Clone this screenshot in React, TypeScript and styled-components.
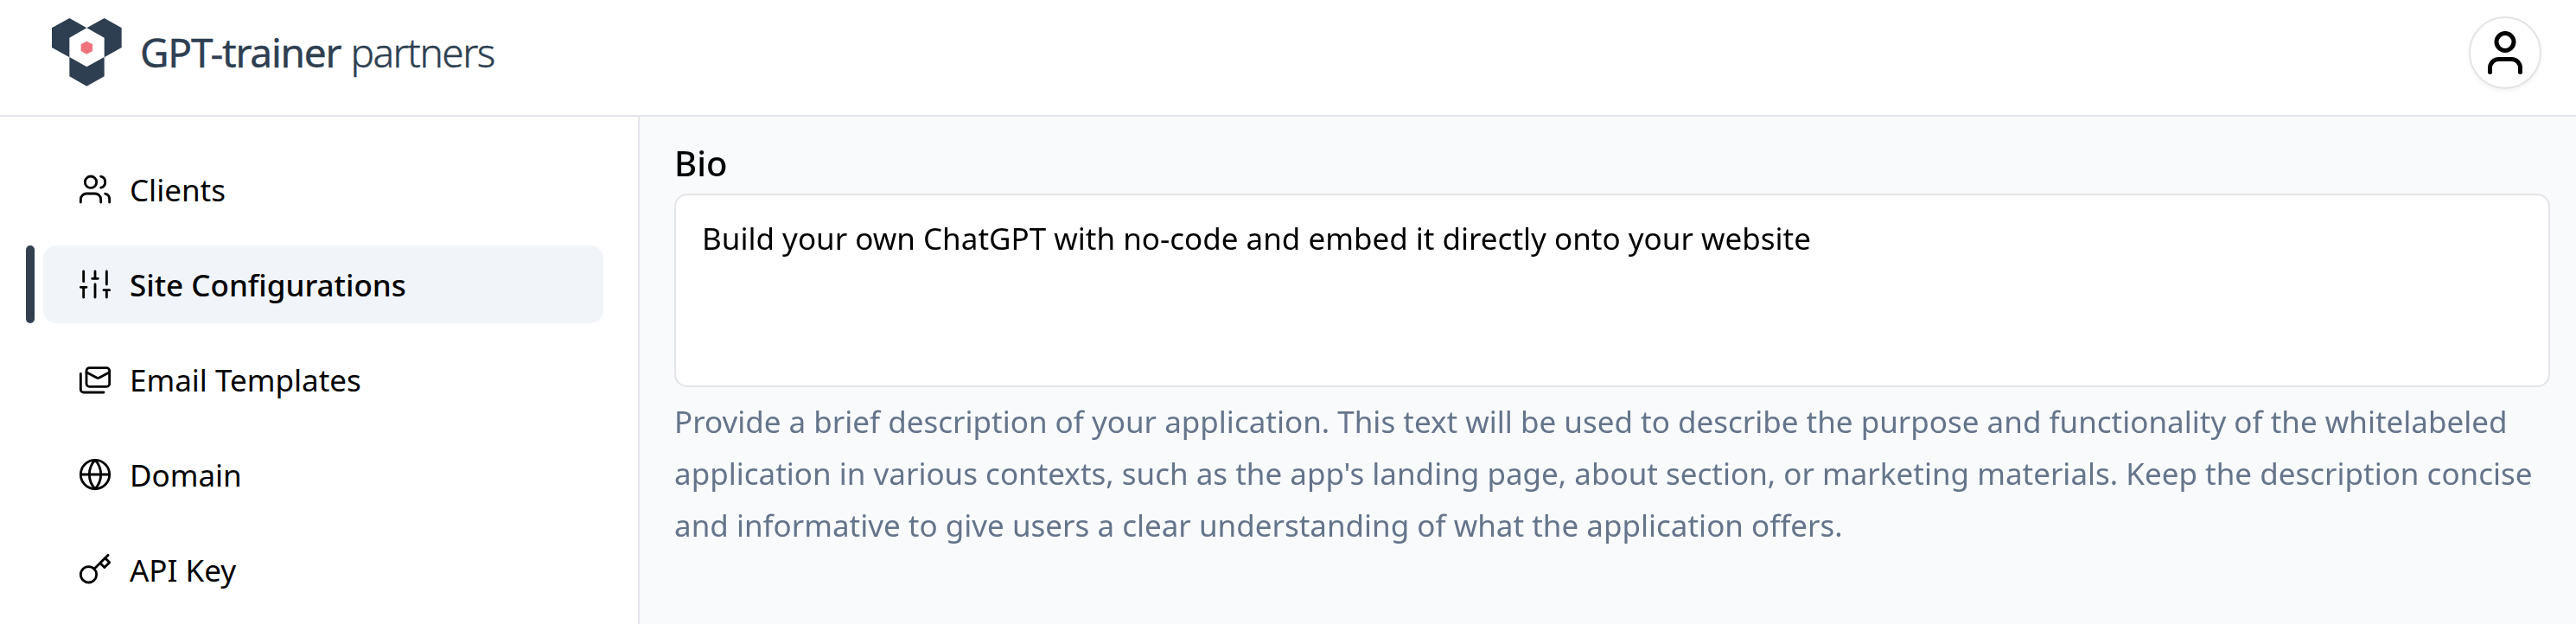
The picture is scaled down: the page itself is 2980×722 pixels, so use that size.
import React from "react";
import styled, { createGlobalStyle } from "styled-components";

const GlobalStyle = createGlobalStyle`
  *, *::before, *::after { box-sizing: border-box; }
  body {
    margin: 0;
    background: #fff;
    color: #000;
    font-family: "Noto Sans", sans-serif;
    font-size: 35px;
    line-height: 60px;
  }
`;

const Page = styled.div`
  display: flex;
  flex-direction: column;
  height: 722px;
  overflow: hidden;
`;

const Header = styled.header`
  display: flex;
  flex: none;
  align-items: flex-start;
  justify-content: space-between;
  height: 135px;
  padding: 19px 40px 0 60px;
  border-bottom: 2px solid #e4e4eb;
`;

const Brand = styled.a`
  display: flex;
  align-items: flex-start;
  padding-top: 2px;
  color: #2e3f51;
`;

const LogoMark = styled.svg`
  display: block;
  width: 81px;
  height: 79px;
`;

const Wordmark = styled.span`
  display: flex;
  margin-left: 21px;
  padding-top: 9px;
  font-size: 46px;
  line-height: 60px;
  white-space: nowrap;
`;

const WordPart = styled.span<{ $weight: number; $spacing: number; $gap?: number }>`
  margin-left: ${(p) => p.$gap ?? 0}px;
  font-weight: ${(p) => p.$weight};
  letter-spacing: ${(p) => p.$spacing}px;
  -webkit-text-stroke: 0.4px currentColor;
`;

const Avatar = styled.button`
  display: flex;
  align-items: center;
  justify-content: center;
  width: 84px;
  height: 84px;
  padding: 0;
  border: 2px solid #e4e4e7;
  border-radius: 50%;
  background: #fff;
  color: #000;
  box-shadow: 0 2.5px 5px rgba(0, 0, 0, 0.05);
`;

const Body = styled.div`
  display: flex;
  flex: 1;
  min-height: 0;
`;

const Sidebar = styled.nav`
  display: flex;
  flex: none;
  flex-direction: column;
  gap: 20px;
  width: 740px;
  padding: 39px 40px 0 30px;
  border-right: 2px solid #e4e4eb;
`;

const NavRow = styled.div`
  display: flex;
  flex: none;
  gap: 10px;
  height: 90px;
`;

const Marker = styled.span<{ $active?: boolean }>`
  width: 10px;
  border-radius: 5px;
  background: ${(p) => (p.$active ? "#323f50" : "transparent")};
`;

const NavLink = styled.a<{ $active?: boolean }>`
  display: flex;
  flex: 1;
  align-items: center;
  gap: 20px;
  padding: 0 40px;
  border-radius: 15px;
  background: ${(p) => (p.$active ? "#f1f5f9" : "transparent")};
  font-weight: ${(p) => (p.$active ? 500 : 400)};
`;

const NavText = styled.span`
  padding-top: 1px;
`;

const Glyph = styled.svg<{ $size: number; $stroke: number }>`
  display: block;
  flex: none;
  width: ${(p) => p.$size}px;
  height: ${(p) => p.$size}px;
  fill: none;
  stroke: currentColor;
  stroke-width: ${(p) => p.$stroke};
  stroke-linecap: round;
  stroke-linejoin: round;
`;

const Content = styled.main`
  flex: 1;
  padding: 34px 30px 0 40px;
  background: #f8fafc;
  will-change: transform;
`;

const Label = styled.label`
  display: block;
  font-size: 40px;
  font-weight: 500;
  line-height: 40px;
`;

const BioInput = styled.textarea`
  display: block;
  width: 100%;
  height: 224px;
  margin: 15px 0 0;
  padding: 20px 30px;
  border: 2px solid #e4e4e7;
  border-radius: 15px;
  outline: none;
  background: #fff;
  color: #000;
  font: inherit;
  resize: none;
`;

const Hint = styled.p`
  margin: 10px 0 0;
  color: #64748b;
`;

const navItems = [
  {
    label: "Clients",
    icon: (
      <>
        <path d="M16 21v-2a4 4 0 0 0-4-4H6a4 4 0 0 0-4 4v2" />
        <circle cx="9" cy="7" r="4" />
        <path d="M22 21v-2a4 4 0 0 0-3-3.87" />
        <path d="M16 3.13a4 4 0 0 1 0 7.75" />
      </>
    ),
  },
  {
    label: "Site Configurations",
    active: true,
    icon: <path d="M4 21v-7M4 10V3M12 21v-9M12 8V3M20 21v-5M20 12V3M2 14h4M10 8h4M18 16h4" />,
  },
  {
    label: "Email Templates",
    icon: (
      <>
        <rect x="6" y="4" width="16" height="13" rx="2" />
        <path d="m22 7-7.1 3.78c-.57.3-1.23.3-1.8 0L6 7" />
        <path d="M2 8v11c0 1.1.9 2 2 2h14" />
      </>
    ),
  },
  {
    label: "Domain",
    icon: (
      <>
        <circle cx="12" cy="12" r="10" />
        <path d="M12 2a14.5 14.5 0 0 0 0 20 14.5 14.5 0 0 0 0-20M2 12h20" />
      </>
    ),
  },
  {
    label: "API Key",
    icon: (
      <>
        <circle cx="7.5" cy="15.5" r="5.5" />
        <path d="m21 2-9.6 9.6M15.5 7.5l3 3L22 7l-3-3" />
      </>
    ),
  },
];

export default function App() {
  return (
    <Page>
      <GlobalStyle />
      <Header>
        <Brand>
          <LogoMark viewBox="0 0 243 237">
            <g fill="#2e3f51">
              <path d="M61 0 121 34V102L61 136 0 102V34Z" />
              <path d="M182 0 242 34V102L182 136 121 102V34Z" />
              <path d="M121 102 182 136V202L121 236 61 202V136Z" />
            </g>
            <path d="M121 34 182 68V135L121 169 61 135V68Z" fill="#fff" />
            <path d="M121 80 141 91V114L121 125 101 114V91Z" fill="#ee717b" />
          </LogoMark>
          <Wordmark>
            <WordPart $weight={400} $spacing={-1.2}>GPT-trainer</WordPart>
            <WordPart $weight={300} $spacing={-1.5} $gap={11}>partners</WordPart>
          </Wordmark>
        </Brand>
        <Avatar aria-label="Account">
          <Glyph viewBox="0 0 24 24" $size={60} $stroke={2}>
            <circle cx="12" cy="7" r="4" />
            <path d="M19 21v-2a4 4 0 0 0-4-4H9a4 4 0 0 0-4 4v2" />
          </Glyph>
        </Avatar>
      </Header>
      <Body>
        <Sidebar>
          {navItems.map((item) => (
            <NavRow key={item.label}>
              <Marker $active={item.active} />
              <NavLink $active={item.active}>
                <Glyph viewBox="0 0 24 24" $size={40} $stroke={1.7}>
                  {item.icon}
                </Glyph>
                <NavText>{item.label}</NavText>
              </NavLink>
            </NavRow>
          ))}
        </Sidebar>
        <Content>
          <Label htmlFor="bio">Bio</Label>
          <BioInput
            id="bio"
            spellCheck={false}
            defaultValue="Build your own ChatGPT with no-code and embed it directly onto your website"
          />
          <Hint>
            Provide a brief description of your application. This text will be used to describe the
            purpose and functionality of the whitelabeled application in various contexts, such as
            the app's landing page, about section, or marketing materials. Keep the description
            concise and informative to give users a clear understanding of what the application
            offers.
          </Hint>
        </Content>
      </Body>
    </Page>
  );
}
